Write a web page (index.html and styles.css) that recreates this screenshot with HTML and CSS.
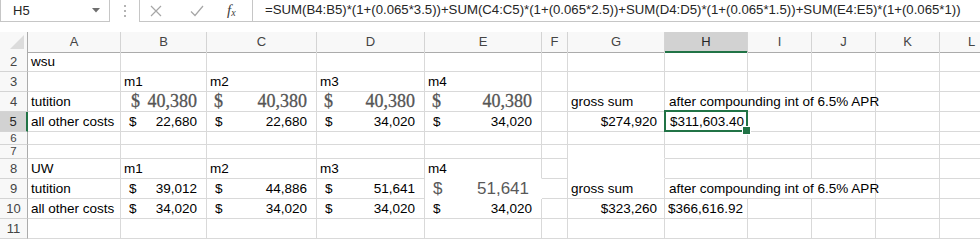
FILE: index.html
```html
<!DOCTYPE html>
<html lang="en">
<head>
  <meta charset="UTF-8">
  <title>tuition sheet</title>
  <link rel="stylesheet" href="styles.css">
</head>
<body>
  <div class="formula-bar">
    <div class="name-box">
      <span>H5</span>
      <svg width="8" height="5" viewBox="0 0 8 5"><path d="M0 0h8L4 4.5z" fill="#6e6e6e"/></svg>
    </div>
    <div class="grip"><i></i><i></i><i></i></div>
    <div class="fx-buttons">
      <svg class="btn-cancel" width="12" height="12" viewBox="0 0 12 12"><path d="M1 1L11 11M11 1L1 11" stroke="#a6a6a6" stroke-width="1.2" fill="none"/></svg>
      <svg class="btn-enter" width="14" height="12" viewBox="0 0 14 12"><path d="M1 6.5L5 10.5L13 1" stroke="#a6a6a6" stroke-width="1.2" fill="none"/></svg>
      <span class="btn-fx">f<sub>x</sub></span>
    </div>
    <div class="formula">=SUM(B4:B5)*(1+(0.065*3.5))+SUM(C4:C5)*(1+(0.065*2.5))+SUM(D4:D5)*(1+(0.065*1.5))+SUM(E4:E5)*(1+(0.065*1))</div>
  </div>

  <div class="sheet">
    <div class="row head">
      <div class="corner"><svg width="14" height="14" viewBox="0 0 14 14"><path d="M14 0V14H0z" fill="#dcdcdc"/></svg></div>
      <div class="hd">A</div><div class="hd">B</div><div class="hd">C</div><div class="hd">D</div>
      <div class="hd">E</div><div class="hd">F</div><div class="hd">G</div><div class="hd sel">H</div>
      <div class="hd">I</div><div class="hd">J</div><div class="hd">K</div><div class="hd">L</div>
    </div>

    <div class="row">
      <div class="rh">2</div>
      <div class="c">wsu</div>
      <div class="c"></div><div class="c"></div><div class="c"></div><div class="c"></div><div class="c"></div>
      <div class="c"></div><div class="c"></div><div class="c"></div><div class="c"></div><div class="c"></div><div class="c"></div>
    </div>

    <div class="row">
      <div class="rh">3</div>
      <div class="c"></div>
      <div class="c">m1</div><div class="c">m2</div><div class="c">m3</div><div class="c">m4</div>
      <div class="c"></div><div class="c"></div><div class="c"></div><div class="c"></div><div class="c"></div><div class="c"></div><div class="c"></div>
    </div>

    <div class="row">
      <div class="rh">4</div>
      <div class="c">tutition</div>
      <div class="c acct serif first"><span>$</span><span>40,380</span></div>
      <div class="c acct serif"><span>$</span><span>40,380</span></div>
      <div class="c acct serif"><span>$</span><span>40,380</span></div>
      <div class="c acct serif"><span>$</span><span>40,380</span></div>
      <div class="c"></div>
      <div class="c">gross sum</div>
      <div class="c span3">after compounding int of 6.5% APR</div>
      <div class="c"></div><div class="c"></div>
    </div>

    <div class="row">
      <div class="rh sel">5</div>
      <div class="c">all other costs</div>
      <div class="c acct"><span>$</span><span>22,680</span></div>
      <div class="c acct"><span>$</span><span>22,680</span></div>
      <div class="c acct"><span>$</span><span>34,020</span></div>
      <div class="c acct"><span>$</span><span>34,020</span></div>
      <div class="c"></div>
      <div class="c num">$274,920</div>
      <div class="c active">$311,603.40</div>
      <div class="c"></div><div class="c"></div><div class="c"></div><div class="c"></div>
    </div>

    <div class="row r6">
      <div class="rh">6</div>
      <div class="c"></div><div class="c"></div><div class="c"></div><div class="c"></div><div class="c"></div><div class="c"></div>
      <div class="c"></div><div class="c"></div><div class="c"></div><div class="c"></div><div class="c"></div><div class="c"></div>
    </div>

    <div class="row r7">
      <div class="rh">7</div>
      <div class="c"></div><div class="c"></div><div class="c"></div><div class="c"></div><div class="c"></div><div class="c"></div>
      <div class="c no-bottom"></div><div class="c"></div><div class="c"></div><div class="c"></div><div class="c"></div><div class="c"></div>
    </div>

    <div class="row">
      <div class="rh">8</div>
      <div class="c">UW</div>
      <div class="c">m1</div><div class="c">m2</div><div class="c">m3</div><div class="c no-bottom">m4</div>
      <div class="c"></div><div class="c no-bottom"></div>
      <div class="c"></div><div class="c"></div><div class="c"></div><div class="c"></div><div class="c"></div>
    </div>

    <div class="row">
      <div class="rh">9</div>
      <div class="c">tutition</div>
      <div class="c acct"><span>$</span><span>39,012</span></div>
      <div class="c acct"><span>$</span><span>44,886</span></div>
      <div class="c acct"><span>$</span><span>51,641</span></div>
      <div class="c acct big no-bottom"><span>$</span><span>51,641</span></div>
      <div class="c"></div>
      <div class="c">gross sum</div>
      <div class="c span3">after compounding int of 6.5% APR</div>
      <div class="c"></div><div class="c"></div>
    </div>

    <div class="row">
      <div class="rh">10</div>
      <div class="c">all other costs</div>
      <div class="c acct"><span>$</span><span>34,020</span></div>
      <div class="c acct"><span>$</span><span>34,020</span></div>
      <div class="c acct"><span>$</span><span>34,020</span></div>
      <div class="c acct"><span>$</span><span>34,020</span></div>
      <div class="c"></div>
      <div class="c num">$323,260</div>
      <div class="c">$366,616.92</div>
      <div class="c"></div><div class="c"></div><div class="c"></div><div class="c"></div>
    </div>

    <div class="row">
      <div class="rh">11</div>
      <div class="c"></div><div class="c"></div><div class="c"></div><div class="c"></div><div class="c"></div><div class="c"></div>
      <div class="c"></div><div class="c"></div><div class="c"></div><div class="c"></div><div class="c"></div><div class="c"></div>
    </div>
  </div>
</body>
</html>
```

FILE: styles.css
```css
/* base */
* {
  box-sizing: border-box;
}

body {
  margin: 0;
  width: 980px;
  height: 240px;
  overflow: hidden;
  background: #ffffff;
  font-family: "Liberation Sans", Arial, sans-serif;
  color: #000;
}

/* formula bar */
.formula-bar {
  display: flex;
  height: 22px;
  margin-bottom: 10px;
  color: #262626;
  font-size: 13px;
}

.name-box {
  width: 110px;
  display: flex;
  align-items: center;
  justify-content: space-between;
  padding: 0 9px 0 12px;
  border: 1px solid #c6c6c6;
  border-top: none;
}

.grip {
  width: 29px;
  display: flex;
  flex-direction: column;
  align-items: center;
  justify-content: center;
  gap: 3px;
}

.grip i {
  width: 2px;
  height: 2px;
  background: #b4b4b4;
}

.fx-buttons {
  width: 113px;
  display: flex;
  align-items: center;
  padding-left: 10px;
  border: 1px solid #c6c6c6;
  border-top: none;
  border-right: none;
}

.btn-enter {
  margin-left: 28px;
}

.btn-fx {
  margin-left: 23px;
  font-family: "Liberation Serif", serif;
  font-style: italic;
  font-size: 15px;
  color: #404040;
}

.btn-fx sub {
  font-size: 10px;
  vertical-align: -1px;
}

.formula {
  flex: 1;
  padding-left: 12px;
  font-size: 13.2px;
  line-height: 20px;
  white-space: nowrap;
  overflow: hidden;
  border-left: 1px solid #c6c6c6;
  border-bottom: 1px solid #c6c6c6;
}

/* sheet grid */
.sheet {
  width: 980px;
  overflow: hidden;
}

.row {
  display: grid;
  grid-template-columns: 28px 93px 86px 110px 108px 117px 26px 97px 83px 64px 64px 64px 64px;
  height: 20px;
}

.row.r6 {
  height: 13px;
}

.row.r7 {
  height: 14px;
}

.corner {
  display: flex;
  align-items: flex-end;
  justify-content: flex-end;
  padding: 0 3px 3px 0;
  background: #f8f8f8;
  border-right: 1px solid #ababab;
  border-bottom: 1px solid #ababab;
}

.hd {
  background: #f8f8f8;
  color: #444;
  font-size: 13px;
  line-height: 19px;
  text-align: center;
  border-right: 1px solid #d4d4d4;
  border-bottom: 1px solid #ababab;
}

.hd.sel {
  background: #d2d2d2;
  border-bottom: 2px solid #217346;
  color: #262626;
}

.rh {
  background: #f8f8f8;
  color: #444;
  font-size: 13px;
  line-height: 19px;
  text-align: center;
  overflow: hidden;
  border-right: 1px solid #ababab;
  border-bottom: 1px solid #d4d4d4;
}

.r6 .rh,
.r7 .rh {
  font-size: 11.5px;
  line-height: 12px;
}

.rh.sel {
  background: #d2d2d2;
  border-right: 2px solid #217346;
  color: #262626;
}

/* cells */
.c {
  position: relative;
  padding: 0 3px;
  font-size: 13.5px;
  line-height: 19px;
  white-space: nowrap;
  border-right: 1px solid #d9d9d9;
  border-bottom: 1px solid #d9d9d9;
}

.c.span3 {
  grid-column: span 3;
  padding-left: 4px;
}

.c.no-bottom {
  border-bottom-color: transparent;
}

.c.num {
  text-align: right;
  padding-right: 7px;
}

.acct {
  display: flex;
  justify-content: space-between;
  padding: 0 9px 0 8px;
}

.acct.serif {
  font-family: "Liberation Serif", serif;
  font-size: 18px;
  color: #555;
  -webkit-text-stroke: 0.3px #555;
  padding-left: 7px;
}

.acct.serif.first {
  padding-left: 10px;
}

.acct.big {
  font-size: 17px;
  color: #595959;
  padding-right: 12px;
  border-right-color: transparent;
}

/* selected cell */
.c.active {
  padding-left: 5px;
}

.c.active::after {
  content: "";
  position: absolute;
  left: -1px;
  top: -2px;
  right: -1px;
  bottom: -1px;
  border: 2px solid #217346;
}

.c.active::before {
  content: "";
  position: absolute;
  right: -4px;
  bottom: -4px;
  width: 7px;
  height: 7px;
  background: #217346;
  border: 1px solid #ffffff;
  z-index: 1;
}
```
